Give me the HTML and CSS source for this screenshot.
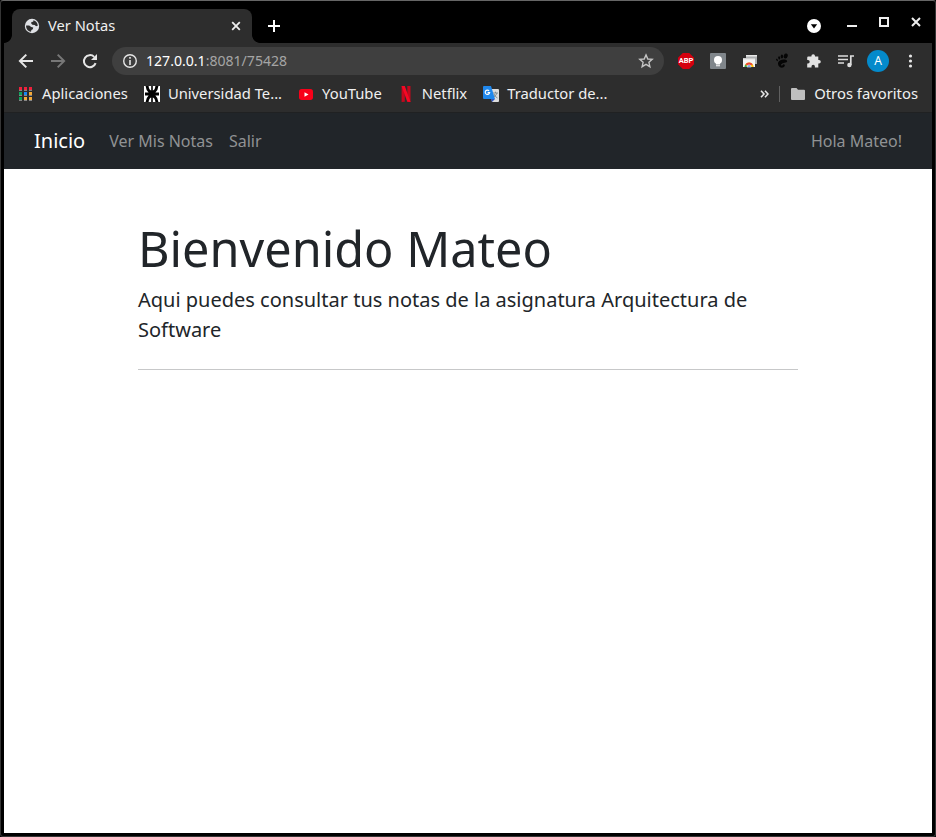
FILE: index.html
```html
<!DOCTYPE html>
<html lang="es">
<head>
<meta charset="utf-8">
<title>Ver Notas</title>
<link rel="stylesheet" href="styles.css">
</head>
<body>
<div class="window">
  <header class="tabstrip">
    <div class="tab">
      <svg viewBox="0 0 16 16" width="16" height="16"><circle cx="8" cy="8" r="7.2" fill="#dfe1e5"/><path d="M9.4 2.2C12 2.8 13.8 5 13.8 7.8L12 8.2 10.8 6.9 8.4 6.7 7.2 5.4 7.4 4.1 9.2 3.8ZM2.1 7.5H5.2L7.2 8.9 9.2 9.4 8.8 11.2 7.4 12 7 13.8C4 13.4 1.9 10.8 2.1 7.5Z" fill="#2d2d2d"/></svg>
      <span class="tab-title">Ver Notas</span>
      <svg viewBox="0 0 10 10" width="10" height="10"><path d="M1.2 1.2 8.8 8.8M8.8 1.2 1.2 8.8" stroke="#eee" stroke-width="1.8"/></svg>
    </div>
    <svg class="new-tab" viewBox="0 0 12 12" width="12" height="12"><path d="M6 0V12M0 6H12" stroke="#fff" stroke-width="2"/></svg>
    <svg class="tab-search" viewBox="0 0 14 14" width="14" height="14"><circle cx="7" cy="7" r="7" fill="#fff"/><path d="M3.8 5.2H10.2L7 9.4Z" fill="#000"/></svg>
    <svg class="minimize" viewBox="0 0 10 2" width="10" height="2"><path d="M0 1H10" stroke="#eee" stroke-width="2"/></svg>
    <svg class="maximize" viewBox="0 0 10 10" width="10" height="10"><path d="M1 1H9V9H1Z" fill="none" stroke="#eee" stroke-width="2"/></svg>
    <svg class="close" viewBox="0 0 10 10" width="10" height="10"><path d="M1 1 9 9M9 1 1 9" stroke="#eee" stroke-width="2"/></svg>
  </header>
  <div class="toolbar">
    <svg viewBox="0 0 16 16" width="16" height="16"><path d="M15 8H2.5M8.3 1.6 1.9 8 8.3 14.4" fill="none" stroke="#e6e6e6" stroke-width="2"/></svg>
    <svg viewBox="0 0 16 16" width="16" height="16"><path d="M1 8H13.5M7.7 1.6 14.1 8 7.7 14.4" fill="none" stroke="#777" stroke-width="2"/></svg>
    <svg viewBox="0 0 16 16" width="16" height="16"><path d="M13.6 10.1A6 6 0 1 1 12.2 3.9" fill="none" stroke="#e6e6e6" stroke-width="2"/><path d="M15 1V7H9Z" fill="#e6e6e6"/></svg>
    <div class="omnibox">
      <svg viewBox="0 0 16 16" width="16" height="16"><circle cx="8" cy="8" r="6.3" fill="none" stroke="#e6e6e6" stroke-width="1.4"/><path d="M8 7V12M8 4V5.7" stroke="#e6e6e6" stroke-width="1.6"/></svg>
      <span class="url"><b>127.0.0.1</b>:8081/75428</span>
      <svg class="star" viewBox="0 0 16 16" width="16" height="16"><path d="M8 1.9 9.8 6 14.2 6.4 10.9 9.3 11.9 13.7 8 11.4 4.1 13.7 5.1 9.3 1.8 6.4 6.2 6Z" fill="none" stroke="#c4c4c4" stroke-width="1.4"/></svg>
    </div>
    <div class="extensions">
      <div class="abp">ABP</div>
      <svg viewBox="0 0 16 16" width="16" height="16"><rect width="16" height="16" rx="1" fill="#80868b"/><circle cx="8" cy="7" r="4" fill="#fff"/><path d="M6 9H10V11.5H6ZM6 12.2H10V13.3H6Z" fill="#fff"/></svg>
      <svg viewBox="0 0 16 16" width="16" height="16"><path d="M4 2H15V11H4Z" fill="#aeb0b2"/><path d="M4 2H15V3.5H4Z" fill="#e9e9e9"/><path d="M1 5H13V14H1Z" fill="#f5f5f5"/><path d="M1 5H13V6.3H1Z" fill="#ccc"/><path d="M2.6 14A4.5 4.5 0 0 1 11.6 14Z" fill="#fbbc04"/><path d="M2.6 14A4.5 4.5 0 0 1 3.3 11.6L6 14Z" fill="#34a853"/><path d="M3.3 11.6A4.5 4.5 0 0 1 10.9 11.6L7 12.6Z" fill="#ea4335"/><path d="M5 14A2.1 2.1 0 0 1 9.2 14Z" fill="#4285f4" stroke="#fff" stroke-width=".6"/></svg>
      <svg viewBox="0 0 16 16" width="16" height="16" fill="#050505"><ellipse cx="11.7" cy="3" rx="2" ry="2.6" transform="rotate(18 11.7 3)"/><ellipse cx="7.9" cy="3.5" rx="1.2" ry="1.9"/><ellipse cx="5.2" cy="4.9" rx="1" ry="1.6" transform="rotate(-18 5.2 4.9)"/><ellipse cx="3" cy="6.9" rx=".8" ry="1.3" transform="rotate(-30 3 6.9)"/><path d="M12.8 7.4C11 5.5 4.1 6.8 4 10.4 3.9 13.3 6.5 15 8.7 14.6 11.2 14.2 11.4 11.2 9.7 11.3 8.5 11.4 8.7 12.8 7.8 12.6 6.2 12.2 7.4 10.3 9.8 9.9 12.2 9.5 13.9 8.7 12.8 7.4Z"/></svg>
      <svg viewBox="0 0 16 16" width="16" height="16"><path d="M2.3 3.6H5.4V3A1.8 1.8 0 0 1 9 3V3.6H12.3V7H13A1.8 1.8 0 0 1 13 10.6H12.3V14.4H8.9V13.5A1.7 1.7 0 0 0 5.5 13.5V14.4H1.2V10.5H2A1.7 1.7 0 0 0 2 7.1H1.2V4.7A1.1 1.1 0 0 1 2.3 3.6Z" fill="#e2e2e2"/></svg>
      <svg viewBox="0 0 16 16" width="16" height="16"><path d="M0 3H10M0 6.5H10M0 10H6" stroke="#ddd" stroke-width="1.6"/><path d="M16 3H12.8V12" fill="none" stroke="#ddd" stroke-width="1.7"/><circle cx="11.4" cy="12" r="2.2" fill="#ddd"/></svg>
      <div class="avatar">A</div>
      <svg viewBox="0 0 16 16" width="16" height="16" fill="#e6e6e6"><circle cx="8.5" cy="3" r="1.6"/><circle cx="8.5" cy="8" r="1.6"/><circle cx="8.5" cy="13" r="1.6"/></svg>
    </div>
  </div>
  <nav class="bookmarks">
    <a class="bookmark"><svg viewBox="0 0 16 16" width="16" height="16"><path d="M1 1h3v3H1zM6 1h3v3H6zM11 1h3v3h-3z" fill="#f0203b"/><path d="M1 6h3v3H1zM1 11h3v3H1z" fill="#0aa35b"/><path d="M6 6h3v3H6z" fill="#1686f4"/><path d="M11 6h3v3h-3zM6 11h3v3H6zM11 11h3v3h-3z" fill="#f8ab35"/><path d="M1 4.4h3m2 0h3m2 0h3M1 9.4h3m2 0h3m2 0h3M1 14.4h3m2 0h3m2 0h3" stroke="#aaa" stroke-width=".8"/></svg><span>Aplicaciones</span></a>
    <a class="bookmark"><svg viewBox="0 0 16 16" width="16" height="16"><path d="M0 0H16V16H0Z" fill="#fff"/><path d="M7.2 0H8.8V4.6Q11 4 11.4 0H14.4Q14 4.3 11.4 6.6H15V9.4H11.4Q14 11.7 14.4 16H11.4Q11 12 8.8 11.4V16H7.2V11.4Q5 12 4.6 16H1.6Q2 11.7 4.6 9.4H1V6.6H4.6Q2 4.3 1.6 0H4.6Q5 4 7.2 4.6Z" fill="#000"/></svg><span>Universidad Te...</span></a>
    <a class="bookmark"><svg viewBox="0 0 16 16" width="16" height="16"><rect x="1" y="3" width="14" height="11" rx="2.7" fill="#f80019"/><path d="M6.5 6.2 10.5 8.5 6.5 10.8Z" fill="#fff"/></svg><span>YouTube</span></a>
    <a class="bookmark"><svg viewBox="0 0 16 16" width="16" height="16"><path d="M3.6 0H6.8V15.7L3.6 16ZM9.3 0H12.5V16L9.3 15.7Z" fill="#c3081d"/><path d="M3.6 0H6.8L12.5 16 9.3 15.7Z" fill="#f50824"/></svg><span>Netflix</span></a>
    <a class="bookmark"><svg viewBox="0 0 16 16" width="16" height="16"><path d="M7 3H15Q16 3 16 4V15Q16 16 15 16H9Z" fill="#ddd"/><path d="M10 7H15M12.5 5.7V7M14 7Q13 10 10.5 11M11 8Q12 11 14.5 12" fill="none" stroke="#76868c" stroke-width=".9"/><path d="M1 0H8L12 13H1Q0 13 0 12V1Q0 0 1 0Z" fill="#2088ed"/><path d="M8 13H12L9 16Z" fill="#3154bd"/><path d="M6.1 4.8A2.2 2.2 0 1 0 6.6 6.7H4.6" fill="none" stroke="#fff" stroke-width="1.2"/></svg><span>Traductor de...</span></a>
    <svg class="overflow" viewBox="0 0 9 8" width="9" height="8"><path d="M1 .8 4 4 1 7.2M5 .8 8 4 5 7.2" fill="none" stroke="#e6e6e6" stroke-width="1.6"/></svg>
    <i class="divider"></i>
    <a class="bookmark folder"><svg viewBox="0 0 16 16" width="16" height="16"><path d="M2 2H6.5L8 3.7H14Q15 3.7 15 4.7V13Q15 14 14 14H2Q1 14 1 13V3Q1 2 2 2Z" fill="#bfbfbf"/></svg><span>Otros favoritos</span></a>
  </nav>
  <nav class="navbar">
    <a class="brand">Inicio</a>
    <a class="link">Ver Mis Notas</a>
    <a class="link">Salir</a>
    <span class="greeting">Hola Mateo!</span>
  </nav>
  <main class="content">
    <h1>Bienvenido Mateo</h1>
    <p>Aqui puedes consultar tus notas de la asignatura Arquitectura de Software</p>
    <hr>
  </main>
</div>
</body>
</html>
```
FILE: styles.css
```css
* { box-sizing: border-box; }
body { margin: 0; background: #000; font-family: "Noto Sans", sans-serif; }
svg { display: block; flex: none; }
span, a { white-space: nowrap; }
.window {
  display: flex; flex-direction: column;
  width: 936px; height: 837px;
  padding: 2px 3px 3px;
  border: 1px solid #353535;
  border-top-color: #666;
  border-radius: 3px;
  background: #000;
}
.tabstrip { display: flex; flex: none; height: 40px; padding: 6px 10px 0 8px; }
.tab {
  position: relative;
  display: flex; align-items: center;
  width: 240px; height: 34px; padding: 0 11px 0 12px;
  border-radius: 8px 8px 0 0;
  background: #2d2d2d;
}
.tab::before, .tab::after {
  content: ""; position: absolute; bottom: 0;
  width: 8px; height: 8px;
}
.tab::before { left: -8px; background: radial-gradient(circle at 0 0, #000 7.5px, #2d2d2d 8.2px); }
.tab::after { right: -8px; background: radial-gradient(circle at 100% 0, #000 7.5px, #2d2d2d 8.2px); }
.tab-title { flex: 1; margin-left: 8px; padding-bottom: 2px; color: #f0f0f0; font-size: 14.67px; line-height: 20px; }
.new-tab { margin: 11px 0 0 16px; }
.tab-search { margin: 10px 0 0 auto; }
.minimize { margin: 16px 0 0 26px; }
.maximize { margin: 8px 0 0 22px; }
.close { margin: 8px 1px 0 22px; }
.toolbar { display: flex; flex: none; align-items: center; gap: 16px; height: 36px; padding: 0 14px; background: #2d2d2d; }
.omnibox {
  display: flex; align-items: center;
  width: 552px; height: 28px; margin-left: -2px; padding: 0 10px;
  border-radius: 14px;
  background: #3f3f3f;
}
.url { margin-left: 8px; color: #a5a5a5; font-size: 14.08px; line-height: 20px; }
.url b { color: #fff; font-weight: 400; }
.star { margin-left: auto; }
.extensions { display: flex; align-items: center; gap: 16px; margin-left: -2px; }
.abp {
  width: 16px; height: 16px;
  background: #d5000f;
  clip-path: polygon(30% 0, 70% 0, 100% 30%, 100% 70%, 70% 100%, 30% 100%, 0 70%, 0 30%);
  color: #fff; font-family: Roboto, sans-serif; font-size: 7.5px; font-weight: 700; line-height: 16px; text-align: center;
}
.avatar {
  width: 22px; height: 22px; margin: 0 -3px;
  border-radius: 50%;
  background: #048acb;
  color: #fff; font-size: 12px; line-height: 22px; text-align: center;
}
.bookmarks {
  display: flex; flex: none; align-items: center;
  height: 34px; padding: 0 14px 4px;
  border-bottom: 1px solid #202122;
  background: #2d2d2d;
}
.bookmark { display: flex; align-items: center; margin-right: 16px; color: #f0f0f0; font-size: 14.77px; line-height: 20px; }
.bookmark span { margin-left: 8px; padding-bottom: 2px; }
.overflow { margin-left: auto; }
.divider { width: 1px; height: 16px; margin: 0 10px; background: #606060; }
.folder { margin-right: 0; font-size: 14.8px; }
.navbar {
  display: flex; flex: none; align-items: center;
  height: 56px; padding: 0 30px;
  background: #212529;
}
.brand { margin-right: 24px; color: #fff; font-size: 20px; line-height: 30px; }
.link { margin-right: 16px; color: #909294; font-size: 16px; line-height: 24px; }
.greeting { margin-left: auto; color: #909294; font-size: 16px; line-height: 24px; }
.content { flex: 1; padding: 50px 134px 0; background: #fff; color: #212529; }
h1 { margin: 0 0 7px; font-size: 48.6px; font-weight: 400; line-height: 59px; }
p { margin: 0; font-size: 20px; line-height: 30px; }
hr { height: 1px; margin: 24px 0 0; border: 0; background: #c7c8c9; }
```
